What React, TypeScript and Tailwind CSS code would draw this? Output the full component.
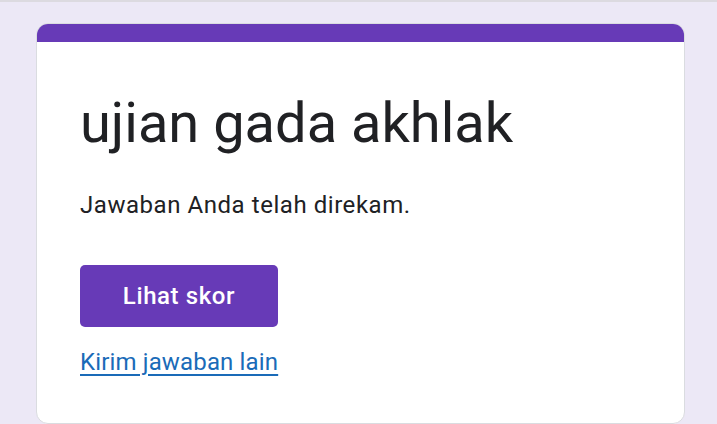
export default function App() {
  return (
    <div
      className="h-[424px] w-[717px] overflow-hidden bg-[#ece8f6]"
      style={{ fontFamily: 'Roboto, "Noto Sans", sans-serif' }}
    >
      <div className="h-[2px] bg-[#dcdae0]" />
      <div className="px-[36px] pt-[21px]">
        <div className="w-[649px] overflow-hidden rounded-[12px] border border-[#dadce0] bg-white">
          {/* Theme bar */}
          <div className="h-[18px] bg-[#673ab7]" />

          <div className="px-[43px] pt-[49px] pb-[46px]">
            <h1 className="text-[56px] leading-[64px] text-[#202124]">
              ujian gada akhlak
            </h1>
            <p className="mt-[35px] text-[24px] leading-[30px] tracking-[0.55px] text-[#202124]">
              Jawaban Anda telah direkam.
            </p>
            <button className="mt-[45px] flex h-[62px] w-[198px] items-center justify-center rounded-[5px] bg-[#673ab7] text-[24px] font-medium tracking-[0.6px] text-white">
              Lihat skor
            </button>
            <a
              href="#"
              className="mt-[20px] block w-fit text-[24px] leading-[30px] tracking-[0.15px] text-[#1a6bb8] underline underline-offset-[4px]"
            >
              Kirim jawaban lain
            </a>
          </div>
        </div>
      </div>
    </div>
  );
}
